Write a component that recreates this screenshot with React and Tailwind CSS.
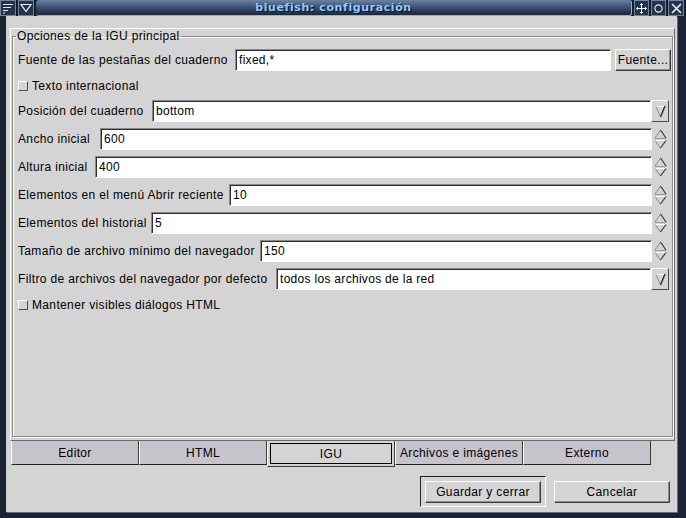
import React from "react";

const rows = [
  { label: "Posición del cuaderno", value: "bottom", lw: "w-[134px]", kind: "combo" },
  { label: "Ancho inicial", value: "600", lw: "w-[82px]", kind: "spin" },
  { label: "Altura inicial", value: "400", lw: "w-[77px]", kind: "spin" },
  { label: "Elementos en el menú Abrir reciente", value: "10", lw: "w-[211px]", kind: "spin" },
  { label: "Elementos del historial", value: "5", lw: "w-[133px]", kind: "spin" },
  { label: "Tamaño de archivo mínimo del navegador", value: "150", lw: "w-[242px]", kind: "spin" },
  { label: "Filtro de archivos del navegador por defecto", value: "todos los archivos de la red", lw: "w-[258px]", kind: "combo" },
];

const tabs = ["Editor", "HTML", "IGU", "Archivos e imágenes", "Externo"];

function Entry({ value }) {
  return (
    <div className="flex-1 h-[22px] flex items-center bg-white border border-t-[#8a8a8a] border-l-[#8a8a8a] border-r-white border-b-white shadow-[inset_1px_1px_0_#2e2e2e] pl-[3px] text-[12px] tracking-[0.3px] text-black whitespace-nowrap overflow-hidden">
      {value}
    </div>
  );
}

function Spin() {
  return (
    <svg width="13" height="22" viewBox="0 0 13 22" className="ml-[2px] mr-[4px] shrink-0">
      <path d="M1 10 L6.5 2" stroke="#8a8a8a" strokeWidth="1" fill="none" />
      <path d="M6.5 2 L12 10" stroke="#3a3a3a" strokeWidth="1.2" fill="none" />
      <path d="M1 10.5 H12" stroke="#9a9a9a" strokeWidth="1" />
      <path d="M1 12.5 H12" stroke="#ffffff" strokeWidth="1" />
      <path d="M1 12.5 L6.5 20" stroke="#8a8a8a" strokeWidth="1" fill="none" />
      <path d="M12 12.5 L6.5 20" stroke="#3a3a3a" strokeWidth="1.2" fill="none" />
    </svg>
  );
}

function ComboButton() {
  return (
    <div className="w-[18px] h-[22px] mr-[2px] shrink-0 bg-[#d4d4d4] border border-t-white border-l-white border-r-[#4a4a4a] border-b-[#4a4a4a] flex items-center justify-center">
      <svg width="14" height="16" viewBox="0 0 14 16">
        <path d="M3 3.5 H11.5" stroke="#ffffff" strokeWidth="1" />
        <path d="M3 3.5 L7 13" stroke="#8a8a8a" strokeWidth="1" fill="none" />
        <path d="M12 3 L7.5 14" stroke="#2a2a2a" strokeWidth="1.4" fill="none" />
      </svg>
    </div>
  );
}

function Check({ label }) {
  return (
    <div className="h-[17px] flex items-center gap-[4px] text-[12px] tracking-[0.35px] text-black">
      <div className="w-[10px] h-[10px] bg-[#d4d4d4] border border-t-white border-l-white border-r-[#4a4a4a] border-b-[#4a4a4a]" />
      <span>{label}</span>
    </div>
  );
}

function Raised({ children, className }) {
  return (
    <div className={"h-[22px] flex items-center justify-center bg-[#d4d4d4] border border-t-white border-l-white border-r-[#3c3c3c] border-b-[#3c3c3c] shadow-[inset_-1px_-1px_0_#8e8e8e] text-[12px] tracking-[0.35px] text-black " + className}>
      {children}
    </div>
  );
}

function TitleBar() {
  return (
    <div className="h-[16px] flex items-stretch bg-[#141b2a] gap-[2px]">
      <div className="w-[16px] bg-[#24324a] border border-[#6f86a6] flex items-center justify-center">
        <svg width="12" height="11" viewBox="0 0 12 11">
          <path d="M1 1.5 H11 M1 4.5 H9 M1 7.5 H6 M1 10 H3" stroke="#dfe9f6" strokeWidth="1.2" />
        </svg>
      </div>
      <div className="w-[16px] bg-[#24324a] border border-[#6f86a6] flex items-center justify-center">
        <svg width="12" height="10" viewBox="0 0 12 10">
          <path d="M1 1.5 H11 L6 8.5 Z" stroke="#eef3fa" strokeWidth="1.2" fill="none" />
        </svg>
      </div>
      <div className="flex-1 rounded-[3px] bg-gradient-to-b from-[#6d82a0] via-[#3a5070] to-[#1c273b] border-b border-r border-[#9ab0cc] flex items-center justify-center">
        <span className="font-['DejaVu_Sans',sans-serif] font-bold text-[11px] leading-none tracking-[0.6px] text-[#8fcaff] [text-shadow:1px_1px_0_#0a1020]">
          bluefish: configuración
        </span>
      </div>
      <div className="w-[15px] bg-[#24324a] border border-[#6f86a6] flex items-center justify-center">
        <svg width="11" height="11" viewBox="0 0 11 11">
          <path d="M5.5 0.5 V10.5 M0.5 5.5 H10.5 M4 2 L5.5 0.5 L7 2 M4 9 L5.5 10.5 L7 9 M2 4 L0.5 5.5 L2 7 M9 4 L10.5 5.5 L9 7" stroke="#eef3fa" strokeWidth="1" fill="none" />
        </svg>
      </div>
      <div className="w-[15px] bg-[#24324a] border border-[#6f86a6] flex items-center justify-center">
        <svg width="11" height="11" viewBox="0 0 11 11">
          <circle cx="5.5" cy="5.5" r="3.6" stroke="#eef3fa" strokeWidth="1.1" fill="none" />
        </svg>
      </div>
      <div className="w-[16px] mr-[2px] bg-[#24324a] border border-[#6f86a6] flex items-center justify-center">
        <svg width="11" height="11" viewBox="0 0 11 11">
          <path d="M1 1 L10 10 M10 1 L1 10" stroke="#eef3fa" strokeWidth="1.6" />
        </svg>
      </div>
    </div>
  );
}

export default function App() {
  return (
    <div className="w-[686px] h-[518px] flex flex-col bg-[#1b2334] font-['Liberation_Sans',Arial,sans-serif] overflow-hidden">
      <TitleBar />
      <div className="flex-1 flex flex-col ml-[6px] mr-[9px] mb-[6px] bg-[#d4d4d4] shadow-[1px_1px_0_#5d6e88]">
        {/* notebook page */}
        <div className="h-[413px] mt-[12px] ml-[4px] mr-[2px] flex flex-col border border-t-white border-l-white border-r-[#6a6a6a] border-b-[#6a6a6a]">
          <fieldset className="flex-1 ml-[1px] mr-[1px] mb-[3px] border border-[#8c8c8c] shadow-[inset_1px_1px_0_#ffffff,1px_1px_0_#ffffff] pl-[5px] pr-[1px] pt-[6px]">
            <legend className="-ml-[2px] px-[1px] text-[12px] leading-[14px] tracking-[0.35px] text-black">
              Opciones de la IGU principal
            </legend>
            <div className="flex flex-col gap-[6px]">
              <div className="h-[22px] flex items-center">
                <span className="w-[217px] shrink-0 text-[12px] tracking-[0.35px] text-black whitespace-nowrap">
                  Fuente de las pestañas del cuaderno
                </span>
                <Entry value="fixed,*" />
                <Raised className="w-[56px] ml-[4px] shrink-0">Fuente...</Raised>
              </div>
              <Check label="Texto internacional" />
              {rows.map((r) => (
                <div key={r.label} className="h-[22px] flex items-center">
                  <span className={r.lw + " shrink-0 text-[12px] tracking-[0.35px] text-black whitespace-nowrap"}>
                    {r.label}
                  </span>
                  <Entry value={r.value} />
                  {r.kind === "spin" ? <Spin /> : <ComboButton />}
                </div>
              ))}
              <Check label="Mantener visibles diálogos HTML" />
            </div>
          </fieldset>
        </div>

        {/* tabs */}
        <div className="h-[26px] ml-[5px] flex items-start">
          {tabs.map((t) =>
            t === "IGU" ? (
              <div key={t} className="w-[128px] h-[26px] bg-[#d4d4d4] border-l border-r border-b border-l-white border-r-[#3c3c3c] border-b-[#3c3c3c] p-[2px]">
                <div className="h-full border border-black flex items-center justify-center text-[12px] tracking-[0.35px] text-black">
                  {t}
                </div>
              </div>
            ) : (
              <div key={t} className="w-[128px] h-[24px] bg-[#c7c3ca] border-l border-r border-b border-l-white border-r-[#3c3c3c] border-b-[#222] flex items-center justify-center text-[12px] tracking-[0.35px] text-black whitespace-nowrap">
                {t}
              </div>
            )
          )}
        </div>

        {/* buttons */}
        <div className="mt-[9px] pr-[7px] flex justify-end items-center gap-[8px]">
          <div className="w-[126px] h-[31px] p-[4px] border border-t-[#1e1e1e] border-l-[#1e1e1e] border-r-white border-b-white">
            <Raised className="w-full">Guardar y cerrar</Raised>
          </div>
          <Raised className="w-[116px]">Cancelar</Raised>
        </div>
      </div>
    </div>
  );
}
